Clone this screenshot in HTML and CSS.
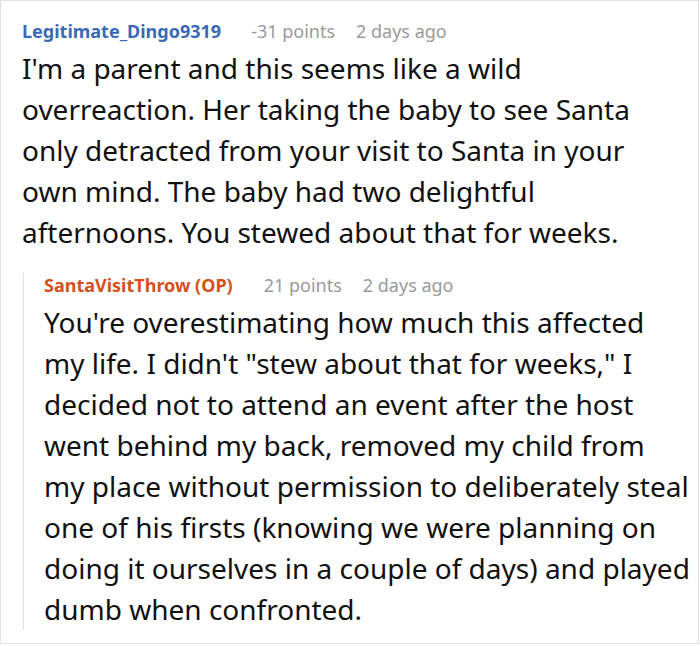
FILE: index.html
```html
<!DOCTYPE html>
<html>
<head>
<meta charset="utf-8">
<link rel="stylesheet" href="styles.css">
</head>
<body>
<div class="card">
  <div class="comment">
    <div class="meta">
      <span class="author">Legitimate_Dingo9319</span>
      <span class="info">-31 points</span>
      <span class="info">2 days ago</span>
    </div>
    <div class="body">
      <span class="line">I'm a parent and this seems like a wild</span>
      <span class="line">overreaction. Her taking the baby to see Santa</span>
      <span class="line">only detracted from your visit to Santa in your</span>
      <span class="line">own mind. The baby had two delightful</span>
      <span class="line">afternoons. You stewed about that for weeks.</span>
    </div>
    <div class="reply">
      <div class="meta">
        <span class="author op">SantaVisitThrow (OP)</span>
        <span class="info">21 points</span>
        <span class="info">2 days ago</span>
      </div>
      <div class="body">
        <span class="line">You're overestimating how much this affected</span>
        <span class="line">my life. I didn't "stew about that for weeks," I</span>
        <span class="line">decided not to attend an event after the host</span>
        <span class="line">went behind my back, removed my child from</span>
        <span class="line">my place without permission to deliberately steal</span>
        <span class="line">one of his firsts (knowing we were planning on</span>
        <span class="line">doing it ourselves in a couple of days) and played</span>
        <span class="line">dumb when confronted.</span>
      </div>
    </div>
  </div>
</div>
</body>
</html>
```
FILE: styles.css
```css
html, body {
  margin: 0;
  padding: 0;
  background: #fff;
}
.card {
  box-sizing: border-box;
  width: 699px;
  height: 644px;
  border: 1px solid #e2e2e2;
  padding: 18px 0 0 21px;
  font-family: "Noto Sans", sans-serif;
  color: #111;
  overflow: hidden;
}
.meta {
  display: flex;
  font-size: 18px;
  line-height: 24px;
}
.author {
  font-weight: bold;
  color: #3a6ab6;
  margin-right: 30px;
}
.author.op {
  color: #d4511c;
  margin-right: 31px;
}
.info {
  color: #9a9a9a;
  margin-right: 21px;
}
.body {
  font-size: 28px;
  line-height: 41px;
  margin-top: 5px;
}
.line {
  display: block;
  white-space: nowrap;
}
.reply {
  margin-top: 20px;
  margin-left: 1px;
  border-left: 1px solid #e0e0e0;
  padding-left: 20px;
}
```
